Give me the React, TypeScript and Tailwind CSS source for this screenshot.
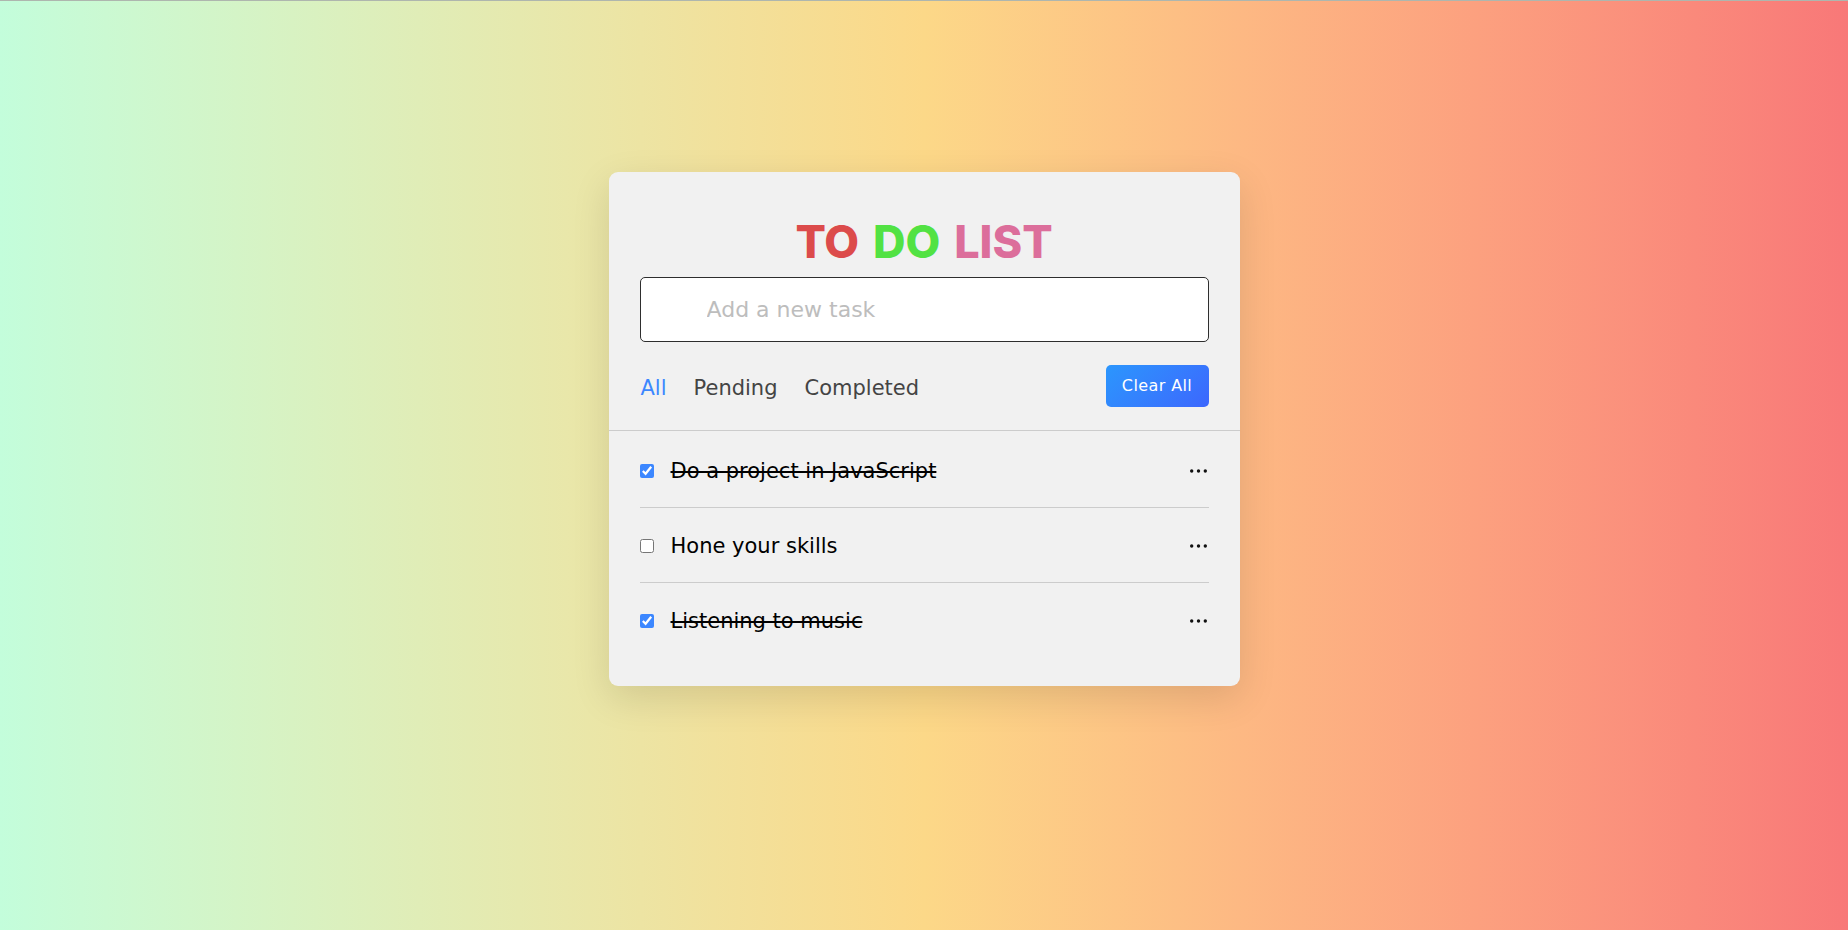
import React, { useState } from 'react';

type Task = { id: number; name: string; done: boolean };

const Dots = () => (
  <svg width="17" height="4" viewBox="0 0 17 4" fill="#111">
    <circle cx="1.7" cy="2" r="1.7" />
    <circle cx="8.5" cy="2" r="1.7" />
    <circle cx="15.3" cy="2" r="1.7" />
  </svg>
);

const App = () => {
  const [filter, setFilter] = useState('all');
  const [tasks, setTasks] = useState<Task[]>([
    { id: 1, name: 'Do a project in JavaScript', done: true },
    { id: 2, name: 'Hone your skills', done: false },
    { id: 3, name: 'Listening to music', done: true },
  ]);

  const filters = [
    { key: 'all', label: 'All' },
    { key: 'pending', label: 'Pending' },
    { key: 'completed', label: 'Completed' },
  ];

  const visible = tasks.filter((t) =>
    filter === 'all' ? true : filter === 'completed' ? t.done : !t.done
  );

  const toggle = (id: number) =>
    setTasks((prev) => prev.map((t) => (t.id === id ? { ...t, done: !t.done } : t)));

  return (
    <div className="min-h-screen bg-linear-to-r from-[#c3fddb] via-[#fcd888] to-[#f87878] font-['DejaVu_Sans',sans-serif]">
      <div className="h-px bg-[#aeb6ae]" />
      <div className="pt-[171px] pb-10">
        {/* card */}
        <div className="mx-auto w-[631px] rounded-[9px] bg-[#f1f1f1] pt-[47px] shadow-[0_12px_38px_rgba(0,0,0,0.12)]">
          <h1 className="text-center font-['Inter',sans-serif] text-[45px] font-extrabold leading-none [word-spacing:4px]">
            <span className="text-[#dc4b4b]">TO</span>{' '}
            <span className="text-[#52e243]">DO</span>{' '}
            <span className="text-[#dc6e9b]">LIST</span>
          </h1>

          <div className="mt-[13px] px-[31px]">
            <input
              type="text"
              placeholder="Add a new task"
              className="h-[65px] w-full rounded-[5px] border border-[#2e2e2e] bg-white pl-[66px] pr-5 text-[22px] text-[#333] outline-none placeholder:text-[#bdbdbd]"
            />
          </div>

          <div className="flex items-center justify-between border-b border-[#cccccc] px-[31px] pt-[23px] pb-[23px]">
            <div className="mt-[5px] flex items-center gap-[27px] pl-px text-[21px]">
              {filters.map((f) => (
                <span
                  key={f.key}
                  onClick={() => setFilter(f.key)}
                  className={`cursor-pointer ${filter === f.key ? 'text-[#3c87ff]' : 'text-[#444]'}`}
                >
                  {f.label}
                </span>
              ))}
            </div>
            <button
              onClick={() => setTasks([])}
              className="h-[42px] w-[103px] rounded-[5px] bg-linear-135 from-[#2b96fd] to-[#3c66fd] text-[16px] tracking-[0.4px] text-white"
            >
              Clear All
            </button>
          </div>

          <ul className="px-[31px] pt-[24px] pb-[49px]">
            {visible.map((task, i) => {
              const last = i === visible.length - 1;
              return (
                <li
                  key={task.id}
                  className={`flex items-center justify-between ${
                    last ? '' : 'mb-[22px] border-b border-[#cccccc] pb-[20px]'
                  }`}
                >
                  <label className="flex items-center">
                    <input
                      type="checkbox"
                      checked={task.done}
                      onChange={() => toggle(task.id)}
                      className="m-0 h-[14px] w-[14px] accent-[#3c87ff]"
                    />
                    <span
                      className={`ml-[17px] text-[21px] leading-[32px] text-black ${
                        task.done ? 'line-through' : ''
                      }`}
                    >
                      {task.name}
                    </span>
                  </label>
                  <span className="mr-[2px] flex items-center">
                    <Dots />
                  </span>
                </li>
              );
            })}
          </ul>
        </div>
      </div>
    </div>
  );
};

export default App;
